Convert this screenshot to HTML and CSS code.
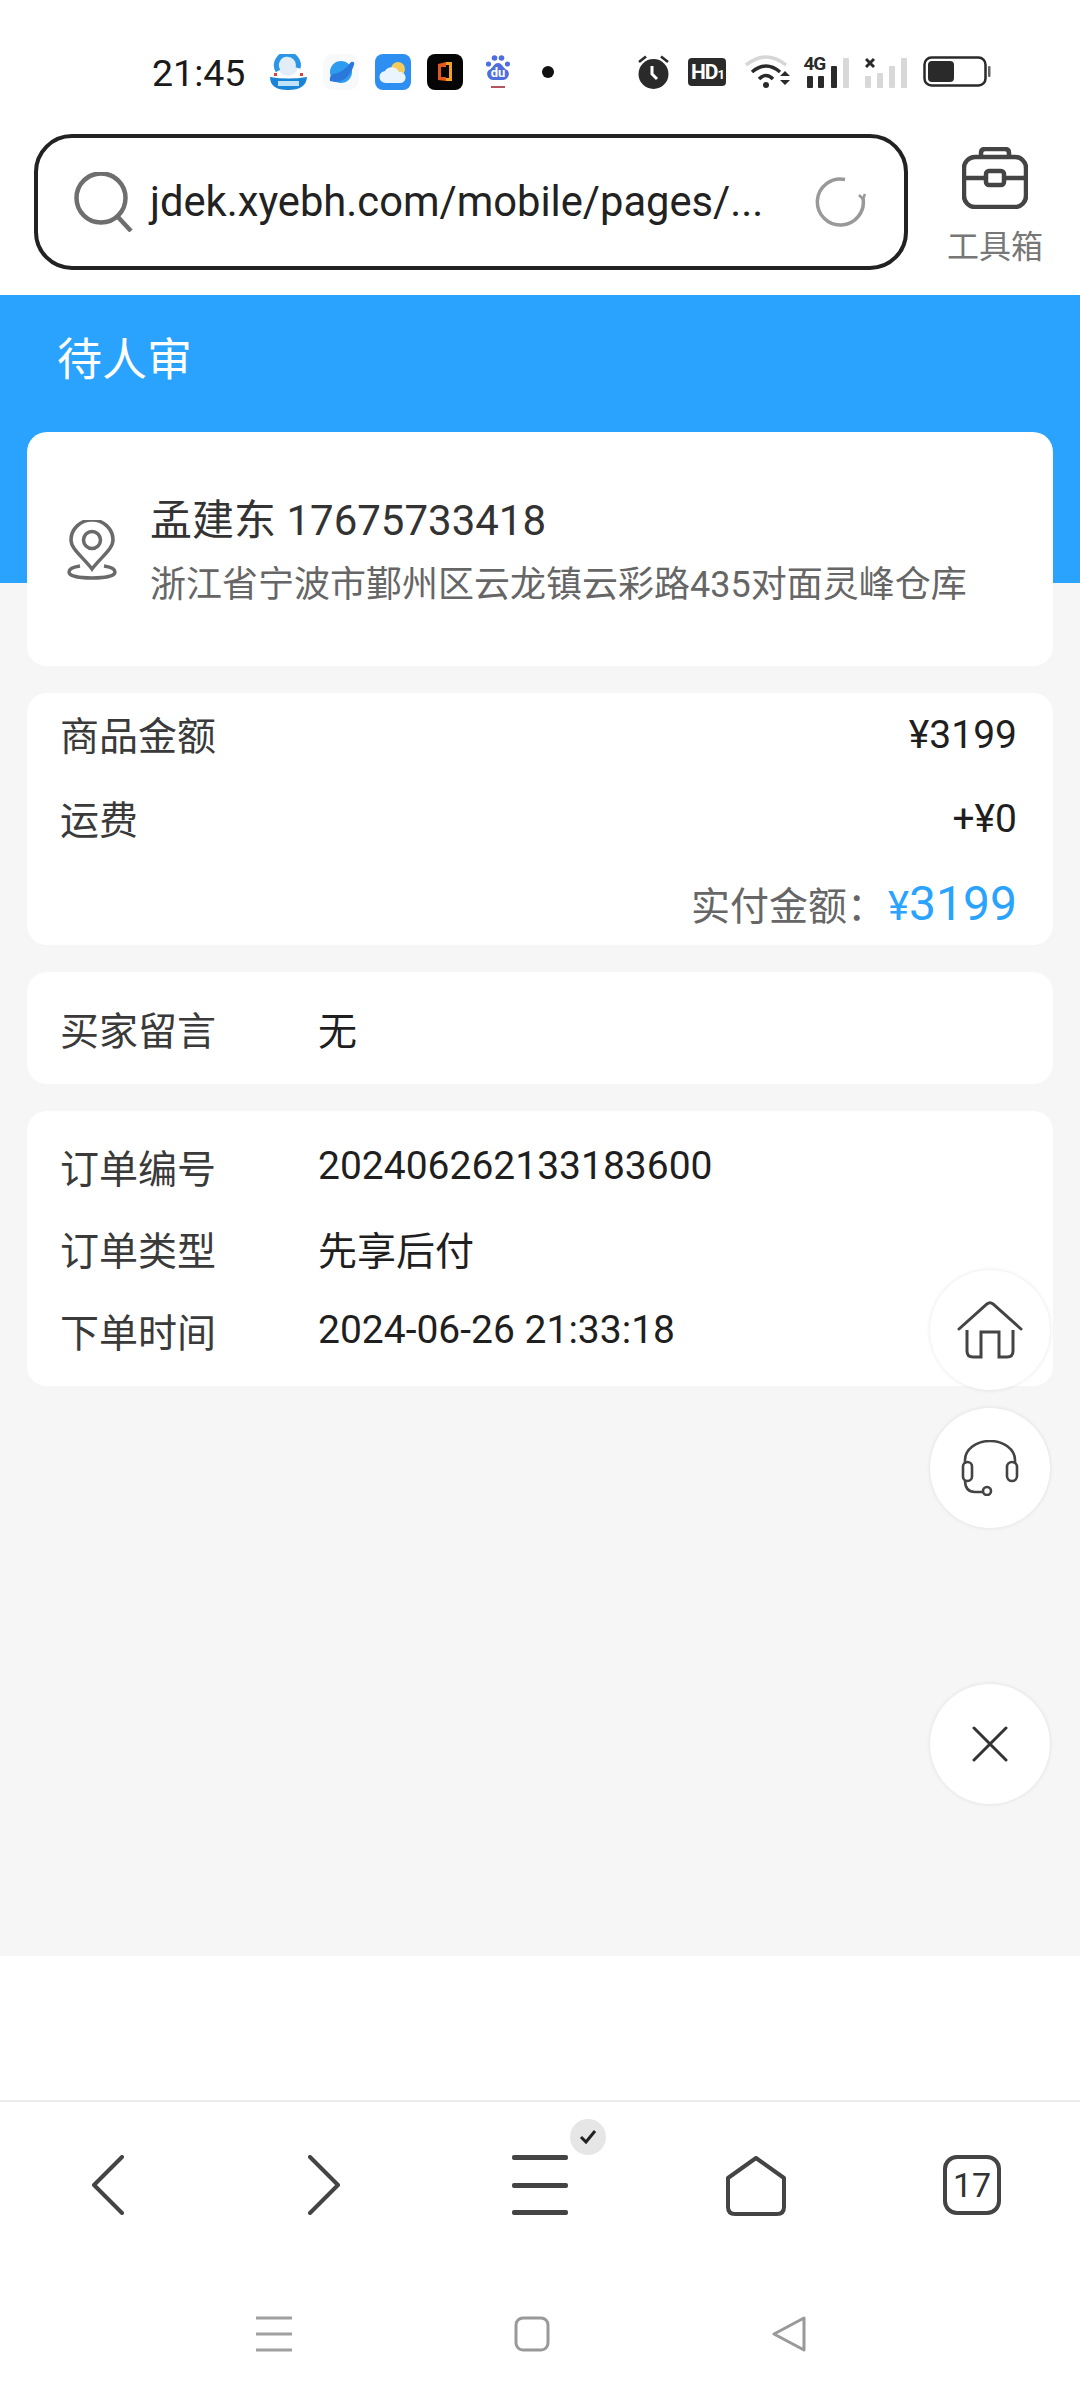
FILE: index.html
```html
<!DOCTYPE html>
<html lang="zh-CN">
<head>
    <meta charset="UTF-8">
    <meta name="viewport" content="width=device-width, initial-scale=1.0">
    <title>待人审</title>
    <link rel="stylesheet" href="styles.css">
</head>
<body>
    <div class="status-bar">
        <span class="clock">21:45</span>
        <div class="app-icons">
            <svg width="37" height="36" viewBox="0 0 37 36">
                <circle cx="18" cy="12" r="10" fill="#e3edf8"/>
                <path d="M8 17A11 11 0 1 1 28 14" fill="none" stroke="#2b96e8" stroke-width="5"/>
                <path d="M4 19H7V22H4ZM30 19H33V22H30Z" fill="#d8453c"/>
                <path d="M0 23Q18 26 37 23Q36 36 18 36T0 23Z" fill="#1a84d6"/>
                <rect x="8" y="27" width="21" height="5" fill="#bfe2f8"/>
            </svg>
            <svg width="36" height="36" viewBox="0 0 36 36">
                <rect width="36" height="36" rx="10" fill="#f8f9fb"/>
                <circle cx="18" cy="18" r="11" fill="#2f9cef"/>
                <path d="M7 27Q6 22 10 20Q20 19 28 8Q32 7 31 11Q25 28 12 28Z" fill="#2b78dc"/>
            </svg>
            <svg width="36" height="36" viewBox="0 0 36 36">
                <rect width="36" height="36" rx="8" fill="#2e8ff2"/>
                <circle cx="23" cy="15" r="7" fill="#f6cb57"/>
                <path d="M11 29A6 6 0 0 1 10 17A8 8 0 0 1 24 18A5.500 5.500 0 0 1 26 29Z" fill="#eaf4fd"/>
            </svg>
            <svg width="36" height="36" viewBox="0 0 36 36">
                <rect width="36" height="36" rx="8" fill="#050505"/>
                <path d="M11 10L19 8V27L11 26Z" fill="#e4571c"/>
                <path d="M19 8H25V27H19V24H22V11H19Z" fill="#f3a11f"/>
                <path d="M14 13H19V23H14Z" fill="#050505"/>
            </svg>
            <svg class="baidu" width="26" height="36" viewBox="0 0 26 36">
                <g fill="#4e6ee0">
                    <circle cx="3.500" cy="10" r="2.600"/>
                    <circle cx="9.500" cy="4" r="2.800"/>
                    <circle cx="16.500" cy="4" r="2.800"/>
                    <circle cx="22.500" cy="10" r="2.600"/>
                    <path d="M13 9C17 9 18 14 22 16C26 19 23 26 18 26H8C3 26 0 19 4 16C8 14 9 9 13 9Z"/>
                </g>
                <text x="13" y="23" class="baidu-text">du</text>
                <rect x="6" y="32" width="14" height="2" fill="#b3545f"/>
            </svg>
            <span class="notify-dot"></span>
        </div>
        <div class="sys-icons">
            <svg width="33" height="35" viewBox="0 0 33 35">
                <circle cx="16.500" cy="19" r="15" fill="#2a2a2a"/>
                <path d="M2 7L9 1.500M31 7L24 1.500" stroke="#2a2a2a" stroke-width="2.600"/>
                <path d="M15 11V19L20 24" fill="none" stroke="#fff" stroke-width="3"/>
            </svg>
            <div class="hd-badge">HD<small>1</small></div>
            <svg class="wifi" width="46" height="34" viewBox="0 0 46 34">
                <path d="M1 10Q21 -6 41 10" fill="none" stroke="#d6d6d6" stroke-width="3.500"/>
                <path d="M7 17Q21 5 35 17" fill="none" stroke="#2a2a2a" stroke-width="3.500"/>
                <path d="M14 24Q21 17 28 24" fill="none" stroke="#2a2a2a" stroke-width="3.500"/>
                <circle cx="21" cy="30" r="3" fill="#2a2a2a"/>
                <path d="M35 21L40 16L45 21ZM35 25L40 30L45 25Z" fill="#2a2a2a"/>
            </svg>
            <div class="signal">
                <span class="net-type">4G</span>
                <svg width="46" height="32" viewBox="0 0 46 32">
                    <rect x="4" y="20" width="6" height="12" rx="1" fill="#2a2a2a"/>
                    <rect x="15" y="20" width="6" height="12" rx="1" fill="#2a2a2a"/>
                    <rect x="28" y="10" width="6" height="22" rx="1" fill="#2a2a2a"/>
                    <rect x="40" y="2" width="6" height="30" rx="1" fill="#d8d8d8"/>
                </svg>
            </div>
            <svg width="42" height="32" viewBox="0 0 42 32">
                <path d="M1 3L9 11M9 3L1 11" stroke="#2a2a2a" stroke-width="3"/>
                <rect x="0" y="20" width="6" height="12" rx="1" fill="#d8d8d8"/>
                <rect x="12" y="17" width="6" height="15" rx="1" fill="#d8d8d8"/>
                <rect x="24" y="10" width="6" height="22" rx="1" fill="#d8d8d8"/>
                <rect x="36" y="2" width="6" height="30" rx="1" fill="#d8d8d8"/>
            </svg>
            <svg width="68" height="32" viewBox="0 0 68 32">
                <rect x="1.500" y="1.500" width="61" height="28" rx="7" fill="none" stroke="#2a2a2a" stroke-width="2.500"/>
                <rect x="5" y="5" width="26" height="21" rx="4" fill="#2a2a2a"/>
                <rect x="65" y="10" width="2.500" height="11" rx="1" fill="#666"/>
            </svg>
        </div>
    </div>

    <div class="browser-bar">
        <div class="url-box">
            <svg class="search-icon" width="60" height="60" viewBox="0 0 60 60">
                <circle cx="27" cy="26" r="24.500" fill="none" stroke="#6e6e6e" stroke-width="4.500"/>
                <path d="M43 44L57 59" stroke="#6e6e6e" stroke-width="4.500"/>
            </svg>
            <span class="url-text">jdek.xyebh.com/mobile/pages/...</span>
            <svg class="reload-icon" width="52" height="52" viewBox="0 0 52 52">
                <path d="M30 3.500A23 23 0 1 0 48 22" fill="none" stroke="#999" stroke-width="3.500"/>
                <path d="M44 19L48 23L50 18" fill="none" stroke="#999" stroke-width="2.500"/>
            </svg>
        </div>
        <div class="toolbox">
            <svg width="66" height="62" viewBox="0 0 66 62">
                <rect x="2" y="10" width="62" height="50" rx="11" fill="none" stroke="#444" stroke-width="4.500"/>
                <path d="M19 10V6Q19 2 23 2H43Q47 2 47 6V10" fill="none" stroke="#444" stroke-width="4.500"/>
                <path d="M2 31H23M43 31H64" stroke="#444" stroke-width="4.500"/>
                <rect x="24" y="24" width="18" height="14" rx="3" fill="none" stroke="#444" stroke-width="4.500"/>
            </svg>
            <span class="toolbox-label">工具箱</span>
        </div>
    </div>

    <div class="page">
        <div class="page-head">待人审</div>
        <div class="cards">
            <div class="card address-card">
                <svg class="pin-icon" width="50" height="60" viewBox="0 0 50 60">
                    <path d="M25 50C16 38 4 30 4 21A21 20 0 0 1 46 21C46 30 34 38 25 50Z" fill="none" stroke="#6a6a6a" stroke-width="3.500" transform="translate(0 -1)"/>
                    <circle cx="25" cy="20" r="8.500" fill="none" stroke="#6a6a6a" stroke-width="3.500"/>
                    <path d="M13 46C6 47 2 49 2 52C2 56 12 58 25 58S48 56 48 52C48 49 44 47 37 46" fill="none" stroke="#6a6a6a" stroke-width="3.500"/>
                </svg>
                <div class="address-text">
                    <div class="person">孟建东 17675733418</div>
                    <div class="address">浙江省宁波市鄞州区云龙镇云彩路435对面灵峰仓库</div>
                </div>
            </div>

            <div class="card amount-card">
                <div class="row between"><span class="label-plain">商品金额</span><span>¥3199</span></div>
                <div class="row between"><span class="label-plain">运费</span><span>+¥0</span></div>
                <div class="row total">
                    <span class="total-label">实付金额：</span>
                    <span class="total-price"><small>¥</small>3199</span>
                </div>
            </div>

            <div class="card note-card">
                <div class="row"><span class="label">买家留言</span><span>无</span></div>
            </div>

            <div class="card order-card">
                <div class="row"><span class="label">订单编号</span><span>202406262133183600</span></div>
                <div class="row"><span class="label">订单类型</span><span>先享后付</span></div>
                <div class="row"><span class="label">下单时间</span><span>2024-06-26 21:33:18</span></div>
            </div>
        </div>

        <div class="float-btn float-home">
            <svg width="66" height="60" viewBox="0 0 66 60">
                <path d="M2 29L30 4Q33 1.500 36 4L64 29" fill="none" stroke="#444" stroke-width="3" stroke-linecap="round"/>
                <path d="M10 30V51Q10 57 16 57H24V32H42V57H50Q56 57 56 51V30" fill="none" stroke="#444" stroke-width="3"/>
            </svg>
        </div>
        <div class="float-btn float-service">
            <svg width="58" height="56" viewBox="0 0 58 56">
                <path d="M4 24V20A25 19 0 0 1 54 20V24" fill="none" stroke="#444" stroke-width="2.600"/>
                <rect x="2" y="22" width="9" height="19" rx="4.500" fill="none" stroke="#444" stroke-width="2.600"/>
                <rect x="46" y="22" width="10" height="19" rx="5" fill="none" stroke="#444" stroke-width="2.600"/>
                <path d="M4 40Q4 52 14 52H22" fill="none" stroke="#444" stroke-width="2.600"/>
                <circle cx="26" cy="51" r="4" fill="none" stroke="#444" stroke-width="2.600"/>
            </svg>
        </div>
        <div class="float-btn float-close">
            <svg width="36" height="36" viewBox="0 0 36 36">
                <path d="M2 2L34 34M34 2L2 34" stroke="#333" stroke-width="3" stroke-linecap="round"/>
            </svg>
        </div>
    </div>

    <div class="nav-bar">
        <svg width="34" height="60" viewBox="0 0 34 60">
            <path d="M31 2L3 30L31 58" fill="none" stroke="#444" stroke-width="4" stroke-linecap="round" stroke-linejoin="round"/>
        </svg>
        <svg width="34" height="60" viewBox="0 0 34 60">
            <path d="M3 2L31 30L3 58" fill="none" stroke="#444" stroke-width="4" stroke-linecap="round" stroke-linejoin="round"/>
        </svg>
        <div class="menu-btn">
            <span class="menu-line"></span>
            <span class="menu-line"></span>
            <span class="menu-line"></span>
            <span class="menu-badge">
                <svg width="18" height="16" viewBox="0 0 18 16">
                    <path d="M2 8L7 13L16 2" fill="none" stroke="#222" stroke-width="3"/>
                </svg>
            </span>
        </div>
        <svg width="62" height="62" viewBox="0 0 62 62">
            <path d="M3 23L31 3L59 23V52Q59 59 52 59H10Q3 59 3 52Z" fill="none" stroke="#444" stroke-width="4" stroke-linejoin="round"/>
        </svg>
        <div class="tab-count">17</div>
    </div>

    <div class="sys-nav">
        <svg width="38" height="36" viewBox="0 0 38 36">
            <path d="M1 2H37M1 18H37M1 34H37" stroke="#a0a0a0" stroke-width="3"/>
        </svg>
        <svg width="36" height="36" viewBox="0 0 36 36">
            <rect x="2" y="2" width="32" height="32" rx="7" fill="none" stroke="#999" stroke-width="3"/>
        </svg>
        <svg width="36" height="36" viewBox="0 0 36 36">
            <path d="M33 2V34L3 18Z" fill="none" stroke="#999" stroke-width="3" stroke-linejoin="round"/>
        </svg>
    </div>
</body>
</html>
```

FILE: styles.css
```css
* {
    box-sizing: border-box;
}
body {
    margin: 0;
    width: 1080px;
    height: 2400px;
    overflow: hidden;
    background: #fff;
    font-family: Roboto, "Noto Sans CJK SC", sans-serif;
    color: #222;
}
.status-bar {
    height: 134px;
    padding: 54px 0 0 152px;
    display: flex;
    align-items: flex-start;
}
.clock {
    font-size: 37.5px;
    line-height: 38px;
    color: #1a1a1a;
}
.app-icons {
    display: flex;
    align-items: center;
    gap: 16px;
    margin-left: 25px;
    height: 36px;
}
.baidu {
    margin-left: 6px;
}
.baidu-text {
    font-size: 13px;
    font-weight: 700;
    fill: #fff;
    text-anchor: middle;
}
.notify-dot {
    width: 12px;
    height: 12px;
    margin-left: 15px;
    border-radius: 50%;
    background: #111;
}
.sys-icons {
    display: flex;
    align-items: center;
    gap: 16px;
    margin-left: 83px;
    height: 36px;
}
.hd-badge {
    width: 38px;
    height: 28px;
    margin-left: 2px;
    margin-right: 3px;
    border-radius: 4px;
    background: #2a2a2a;
    color: #fff;
    font-size: 21px;
    font-weight: 700;
    line-height: 28px;
    text-align: center;
    letter-spacing: -1px;
}
.hd-badge small {
    font-size: 13px;
}
.wifi {
    margin-right: -4px;
}
.signal {
    position: relative;
    width: 46px;
    height: 32px;
}
.net-type {
    position: absolute;
    left: 0;
    top: -2px;
    font-size: 19px;
    font-weight: 700;
    line-height: 19px;
    letter-spacing: -1px;
    color: #2a2a2a;
}
.browser-bar {
    height: 161px;
    padding: 0 0 0 34px;
    display: flex;
    align-items: flex-start;
}
.url-box {
    width: 874px;
    height: 136px;
    padding: 0 37px 0 36px;
    border: 4px solid #222;
    border-radius: 38px;
    display: flex;
    align-items: center;
}
.search-icon {
    flex: none;
}
.url-text {
    margin-left: 16px;
    margin-top: -2px;
    font-size: 41.7px;
    color: #222;
    white-space: nowrap;
    flex: 1;
}
.toolbox {
    margin-left: 28px;
    width: 118px;
    padding-top: 13px;
    display: flex;
    flex-direction: column;
    align-items: center;
    gap: 20px;
}
.toolbox-label {
    font-size: 32px;
    line-height: 36px;
    color: #777;
    white-space: nowrap;
}
.page {
    position: relative;
    height: 1661px;
    background: #f6f6f6;
}
.page-head {
    height: 288px;
    padding: 39px 0 0 57px;
    background: #2aa3ff;
    color: #fff;
    font-size: 45px;
    line-height: 54px;
}
.cards {
    margin-top: -151px;
    padding: 0 27px 0 27px;
    display: flex;
    flex-direction: column;
    gap: 27px;
}
.card {
    background: #fff;
    border-radius: 20px;
    padding: 0 36px 0 33px;
    font-size: 39px;
    color: #1f1f1f;
}
.address-card {
    height: 234px;
    padding-left: 40px;
    display: flex;
    align-items: center;
    gap: 33px;
}
.pin-icon {
    flex: none;
    margin-top: 2px;
}
.address-text {
    margin-top: 13px;
}
.person {
    font-size: 42px;
    line-height: 56px;
    color: #333;
    margin-top: -8px;
}
.address {
    font-size: 36px;
    line-height: 50px;
    margin-top: 11px;
    color: #666;
}
.row {
    display: flex;
    align-items: center;
    height: 84px;
}
.between {
    justify-content: space-between;
}
.label {
    width: 258px;
    flex: none;
    color: #3a3a3a;
}
.label-plain {
    margin-bottom: 4px;
    color: #3a3a3a;
}
.amount-card {
    height: 252px;
}
.total {
    justify-content: flex-end;
}
.total-label {
    margin-right: 2px;
    color: #666;
}
.total-price {
    font-size: 48px;
    color: #2aa3ff;
}
.total-price small {
    font-size: 40px;
}
.note-card {
    height: 112px;
    padding-top: 14px;
}
.order-card {
    height: 275px;
    padding-top: 14px;
}
.order-card .row {
    height: 82px;
}
.float-btn {
    position: absolute;
    left: 930px;
    width: 120px;
    height: 120px;
    border-radius: 50%;
    background: #fff;
    box-shadow: 0 0 4px rgba(0,0,0,0.1);
    display: flex;
    align-items: center;
    justify-content: center;
}
.float-home {
    top: 975px;
}
.float-service {
    top: 1113px;
}
.float-close {
    top: 1389px;
}
.nav-bar {
    height: 216px;
    margin-top: 144px;
    padding-top: 53px;
    border-top: 2px solid #ececec;
    display: grid;
    grid-template-columns: repeat(5, 1fr);
    justify-items: center;
    align-items: start;
}
.menu-btn {
    position: relative;
    width: 56px;
    height: 60px;
    display: flex;
    flex-direction: column;
    justify-content: space-between;
}
.menu-line {
    height: 5px;
    border-radius: 2px;
    background: #444;
}
.menu-badge {
    position: absolute;
    left: 58px;
    top: -36px;
    width: 36px;
    height: 36px;
    border-radius: 50%;
    background: #e6e6e6;
    display: flex;
    align-items: center;
    justify-content: center;
}
.tab-count {
    width: 58px;
    height: 60px;
    border: 4px solid #444;
    border-radius: 14px;
    font-size: 34px;
    line-height: 52px;
    text-align: center;
    color: #333;
}
.sys-nav {
    padding: 0 273px 0 255px;
    display: flex;
    justify-content: space-between;
}
```
